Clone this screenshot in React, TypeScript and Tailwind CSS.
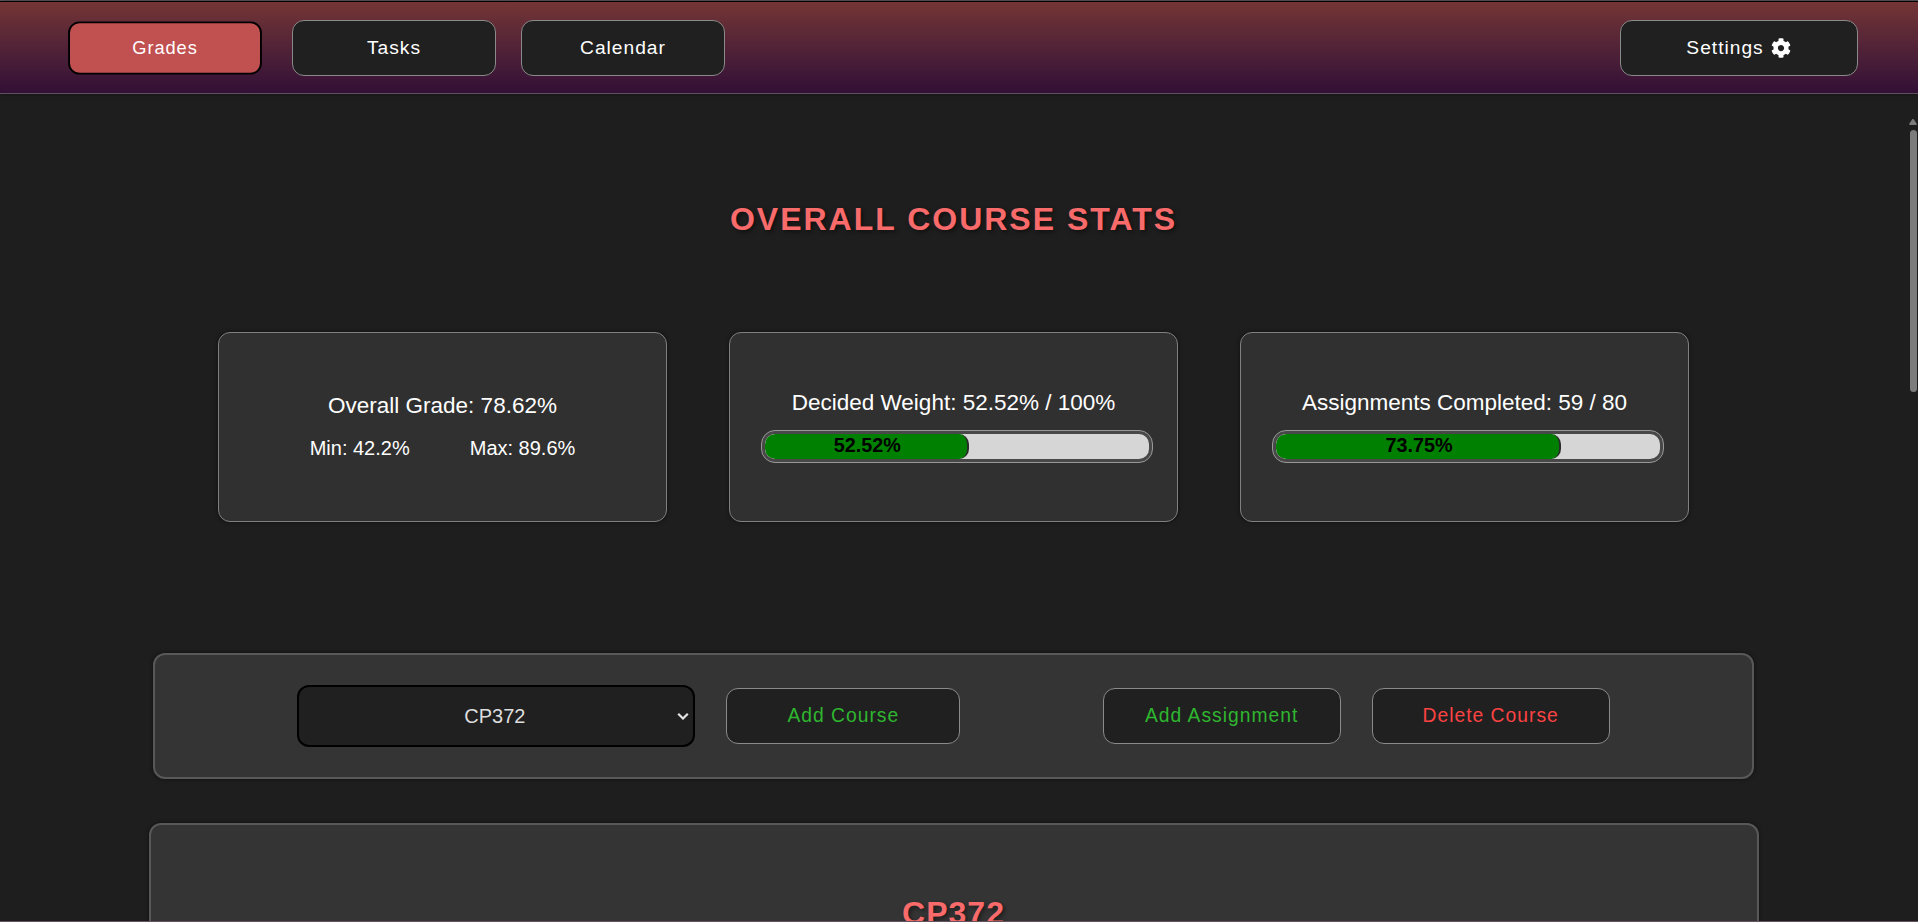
import { FaCog } from "react-icons/fa";

const navButton =
  "flex h-14 items-center justify-center rounded-xl border border-[#8a8a8a] bg-[#202020] text-[19.2px] tracking-[1px] text-white";
const actionButton =
  "flex h-14 items-center justify-center rounded-xl border border-[#8a8a8a] bg-[#202020] text-[19.3px] tracking-[1px]";
const statCard =
  "flex h-[190px] w-[449px] flex-col items-center rounded-xl border border-[#808080] bg-[#303030] text-white shadow-[0_0_4px_rgba(0,0,0,0.5)]";
const heading =
  "text-[32px] leading-9 font-bold text-[#f96b6b] [text-shadow:2px_2px_4px_rgba(0,0,0,0.5)]";

function Progress({ value }: { value: number }) {
  return (
    <div className="mt-[14px] ml-[7px] h-[33px] w-[392px] rounded-[14px] border border-[#989898] bg-[#484848] p-[3px]">
      <div className="h-[25px] w-full overflow-hidden rounded-[10px] bg-[#d6d6d6]">
        <div
          className="box-content flex h-full justify-center rounded-[10px] border-r-2 border-[#2b2b2b] bg-[#008000] text-[19.8px] leading-[22px] font-bold text-black"
          style={{ width: `${value}%` }}
        >
          <span className="pl-[3px]">{value}%</span>
        </div>
      </div>
    </div>
  );
}

export default function App() {
  return (
    <div className="flex h-[922px] w-[1918px] flex-col overflow-hidden border-b border-[#66525f] bg-[#1e1e1e] font-['Liberation_Sans',Arial,sans-serif]">
      <div className="h-px shrink-0 bg-[#606060]" />
      <header className="z-10 flex h-[93px] shrink-0 items-center justify-between border-t border-b border-t-black border-b-[#5f5260] bg-linear-to-b from-[#743534] to-[#330f36] pt-px pr-[60px] pl-[63px] shadow-[0_0_4px_rgba(0,0,0,0.5)]">
        <nav className="flex gap-[25px]">
          <button className="flex h-14 w-[204px] scale-95 items-center justify-center rounded-xl border-2 border-black bg-[#c15050] text-[19.2px] tracking-[1px] text-white">
            Grades
          </button>
          <button className={`${navButton} w-[204px]`}>Tasks</button>
          <button className={`${navButton} w-[204px]`}>Calendar</button>
        </nav>
        <button className={`${navButton} w-[238px] gap-[7px] pr-px`}>
          Settings <FaCog className="size-5" />
        </button>
      </header>

      <div className="flex min-h-0 flex-1">
        <main className="flex w-[1907px] flex-col items-center overflow-hidden">
          <h1 className={`${heading} mt-[107px] shrink-0 tracking-[2px]`}>OVERALL COURSE STATS</h1>

          <section className="mt-[95px] flex shrink-0 gap-[62px]">
            <div className={statCard}>
              <div className="mt-[60px] text-[22.5px] leading-[26px]">Overall Grade: 78.62%</div>
              <div className="mt-[18px] flex gap-[60px] text-[20px] leading-[23px]">
                <span>Min: 42.2%</span>
                <span>Max: 89.6%</span>
              </div>
            </div>
            <div className={statCard}>
              <div className="mt-[57px] text-[22.5px] leading-[26px]">Decided Weight: 52.52% / 100%</div>
              <Progress value={52.52} />
            </div>
            <div className={statCard}>
              <div className="mt-[57px] text-[22.5px] leading-[26px]">Assignments Completed: 59 / 80</div>
              <Progress value={73.75} />
            </div>
          </section>

          <section className="mt-[131px] flex h-[126px] w-[1601px] shrink-0 items-center justify-evenly rounded-xl border-2 border-[#585858] bg-[#343434] shadow-[0_0_4px_rgba(0,0,0,0.5)]">
            <div className="flex items-center gap-[31px]">
              <div className="flex h-[62px] w-[398px] items-center rounded-xl border-2 border-black bg-[#202020] pr-1 pl-[13px] text-[20px] text-[#dedede]">
                <span className="flex-1 text-center">CP372</span>
                <svg className="h-2 w-3" viewBox="0 0 12 8" fill="none" stroke="#e4e4e4" strokeWidth="2.2">
                  <path d="M1.2 1.7 L6 6.5 L10.8 1.7" />
                </svg>
              </div>
              <button className={`${actionButton} w-[234px] text-[#2fb62f]`}>Add Course</button>
            </div>
            <div className="flex items-center gap-[31px]">
              <button className={`${actionButton} w-[238px] text-[#2fb62f]`}>Add Assignment</button>
              <button className={`${actionButton} w-[238px] text-[#fb4343]`}>Delete Course</button>
            </div>
          </section>

          <section className="mt-11 flex h-[400px] w-[1610px] shrink-0 justify-center rounded-xl border-2 border-[#585858] bg-[#343434] pt-[70px] shadow-[0_0_4px_rgba(0,0,0,0.5)]">
            <h2 className={`${heading} tracking-[1px]`}>CP372</h2>
          </section>
        </main>
        <div className="flex w-[11px] flex-col items-end pt-[25px] pr-px">
          <svg className="h-[6px] w-2" viewBox="0 0 8 6" fill="#7c7c7c">
            <path d="M4 0 C4.6 0 5 .5 5.4 1.2 L7.6 4.6 C8 5.3 7.8 6 7 6 H1 C.2 6 0 5.3 .4 4.6 L2.6 1.2 C3 .5 3.4 0 4 0Z" />
          </svg>
          <div className="mt-[5px] h-[262px] w-[7px] rounded-full bg-[#7c7c7c]" />
        </div>
      </div>
    </div>
  );
}
